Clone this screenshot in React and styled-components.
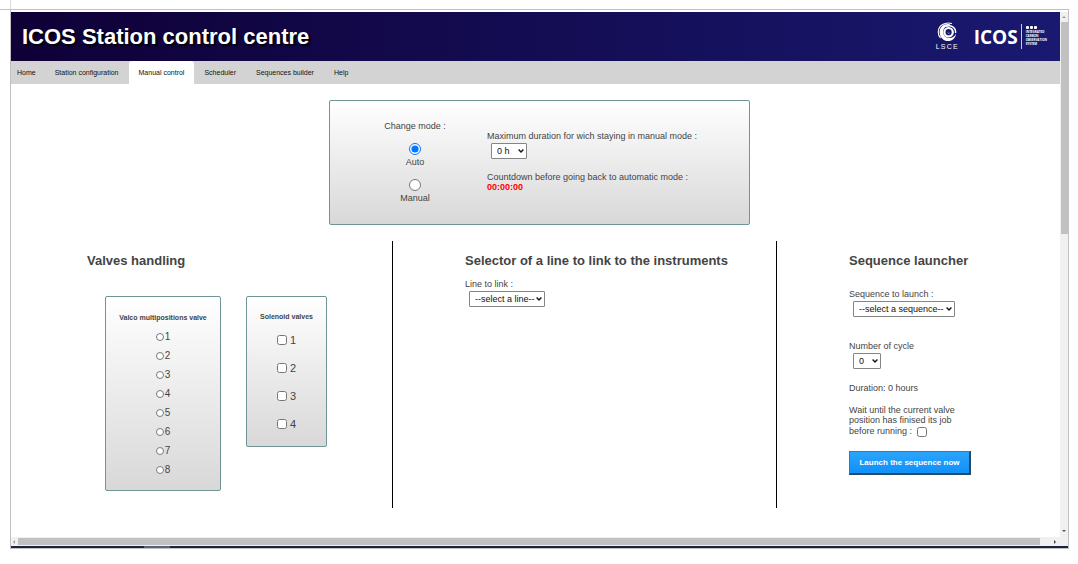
import React from "react";
import styled, { createGlobalStyle } from "styled-components";

const GlobalStyle = createGlobalStyle`
  * { box-sizing: border-box; }
  body {
    margin: 0;
    background: #fff;
    color: #444;
    font: 9px/10px "Liberation Sans", Arial, sans-serif;
  }
  h1, h2, h3, p, ul { margin: 0; padding: 0; }
  input { margin: 0; }
`;

const Page = styled.div`
  display: grid;
  grid-template-columns: 10px minmax(0, 1fr) 9px;
  grid-template-rows: 9px minmax(540px, 1fr) 15px;
  min-height: 100vh;
`;

const Corner = styled.div`
  border-right: 1px solid #dcdcdc;
  margin-right: -1px;
`;

const TopRule = styled.div`
  grid-column: 1;
  grid-row: 2;
  border-top: 1px solid #c4c4c4;
`;

const Frame = styled.div`
  grid-column: 2;
  grid-row: 2;
  display: flex;
  flex-direction: column;
  border: 1px solid #c0c0c4;
  padding-top: 2px;
`;

const Viewport = styled.div`
  flex: 1;
  display: flex;
`;

const Screen = styled.div`
  flex: 1;
  min-width: 0;
`;

const Arrow = styled.span`
  width: 0;
  height: 0;
  border: 2px solid transparent;
  ${(p) => p.$dir === "up" && "border-bottom-color: #999; border-top: 0;"}
  ${(p) => p.$dir === "down" && "border-top-color: #555; border-bottom: 0;"}
  ${(p) => p.$dir === "left" && "border-right-color: #999; border-left: 0;"}
  ${(p) => p.$dir === "right" && "border-left-color: #444; border-right: 0;"}
`;

const ScrollTrack = styled.div`
  display: flex;
  flex-direction: ${(p) => (p.$vertical ? "column" : "row")};
  align-items: center;
  justify-content: space-between;
  flex: none;
  background: #f0f0f0;
  ${(p) => (p.$vertical ? "width: 8px; padding: 4px 0 5px;" : "height: 9px; padding: 0 12px 0 2px;")}
`;

const Thumb = styled.div`
  background: #c1c1c1;
  ${(p) =>
    p.$vertical
      ? "width: 7px; height: 41%; margin: 4px 0 auto;"
      : "height: 7px; flex: 1; margin: 0 14px 0 3px;"}
`;

const BottomBar = styled.div`
  height: 2px;
  flex: none;
  background: linear-gradient(90deg, #1b2340 133px, #5b6078 133px, #5b6078 159px, #1b2340 159px);
`;

const Header = styled.header`
  display: flex;
  align-items: center;
  justify-content: space-between;
  height: 49px;
  padding: 0 13px 0 11px;
  background: linear-gradient(90deg, #0f0036, #191970);
`;

const Title = styled.h1`
  color: #fff;
  font-size: 22px;
  line-height: 26px;
  text-shadow: 2px 2px 2px #000;
`;

const Logos = styled.div`
  display: flex;
  align-items: center;
  gap: 16px;
  color: #fff;
`;

const Lsce = styled.div`
  display: flex;
  flex-direction: column;
  align-items: center;
  width: 22px;
  font-size: 7px;
  line-height: 8px;
  gap: 1px;
`;

const Letters = styled.div`
  align-self: stretch;
  display: flex;
  justify-content: space-between;
`;

const Icos = styled.div`
  display: flex;
  align-items: center;
  font: bold 19px/24px "Open Sans", sans-serif;
`;

const IcosNote = styled.div`
  margin-left: 3px;
  padding: 2px 0 3px 4px;
  border-left: 1px solid #ccd;
  font-size: 3px;
  line-height: 4px;
`;

const Dots = styled.div`
  display: flex;
  gap: 1px;
  height: 4px;
  i { width: 3px; height: 3px; border-radius: 1px; background: #fff; }
`;

const Nav = styled.nav`
  display: flex;
  height: 23px;
  padding-right: 10px;
  background: #d3d3d3;
`;

const Tab = styled.a`
  display: flex;
  align-items: center;
  padding: 0 10px;
  border-radius: 3px 3px 0 0;
  background: ${(p) => (p.$active ? "#fff" : "transparent")};
  color: #111;
  font-size: 7px;
  text-decoration: none;
  &:first-child { padding: 0 9px 0 6px; }
`;

const Panel = styled.section`
  border: 1px solid #6f9599;
  border-radius: 2px;
  background: linear-gradient(#fff, #d8d8d8);
`;

const ModeRow = styled.div`
  display: flex;
  justify-content: center;
  padding: 16px 0 16px 8px;
`;

const ModePanel = styled(Panel)`
  display: flex;
  gap: 41px;
  width: 421px;
  height: 125px;
  padding: 20px 20px 0 54px;
`;

const ModeChoices = styled.div`
  display: flex;
  flex-direction: column;
  align-items: center;
  gap: 12px;
  width: 62px;
`;

const ModeOption = styled.label`
  display: flex;
  flex-direction: column;
  align-items: center;
  gap: 2px;
`;

const Radio = styled.input.attrs({ type: "radio" })`
  width: ${(p) => p.$size}px;
  height: ${(p) => p.$size}px;
`;

const Check = styled.input.attrs({ type: "checkbox" })`
  width: 10px;
  height: 10px;
`;

const ModeDetails = styled.div`
  padding-top: 10px;
`;

const SelectBox = styled.div`
  display: grid;
  align-items: center;
  width: ${(p) => p.$width}px;
  margin: 2px 0 0 4px;
  > * { grid-area: 1 / 1; }
  svg { justify-self: end; margin-right: 3px; pointer-events: none; }
`;

const SelectField = styled.select`
  appearance: none;
  width: 100%;
  height: 16px;
  padding: 0 0 0 5px;
  border: 1px solid #858585;
  border-radius: 1px;
  background: #fff;
  color: #111;
  font: 9px/12px "Liberation Sans", Arial, sans-serif;
`;

const Countdown = styled.p`
  padding-top: 13px;
  strong { display: block; color: #f00; }
`;

const Columns = styled.main`
  display: grid;
  grid-template-columns: 382fr 384fr 283fr;
`;

const Column = styled.section`
  min-height: 267px;
  padding: 12px 0 0 ${(p) => p.$indent}px;
  border-right: 1px solid #000;
  &:last-child { border-right: 0; }
`;

const Heading = styled.h2`
  font-size: 13px;
  line-height: 16px;
  white-space: nowrap;
`;

const Valves = styled.div`
  display: flex;
  align-items: flex-start;
  gap: 25px;
  padding: 27px 0 0 18px;
`;

const ValvePanel = styled(Panel)`
  display: flex;
  flex-direction: column;
  align-items: center;
  width: ${(p) => p.$width}px;
  padding: ${(p) => p.$pad};
`;

const ValveTitle = styled.h3`
  padding-bottom: 4px;
  font-size: 7px;
  line-height: 10px;
  white-space: nowrap;
`;

const ValveRow = styled.label`
  display: flex;
  align-items: center;
  gap: ${(p) => (p.$wide ? 3 : 1)}px;
  height: ${(p) => (p.$wide ? 28 : 19)}px;
  font-size: ${(p) => (p.$wide ? 11 : 10)}px;
`;

const Field = styled.div`
  padding-top: ${(p) => p.$space}px;
  label { display: block; }
`;

const WaitLabel = styled.label`
  display: block;
  width: 122px;
  padding-top: 12px;
  input { margin: 2px 0 2px 2px; vertical-align: middle; }
`;

const LaunchButton = styled.button`
  display: block;
  width: 122px;
  height: 24px;
  margin-top: 12px;
  padding: 0;
  border: 1px solid #3f7899;
  border-right: 2px solid #274a63;
  border-bottom: 2px solid #274a63;
  background: linear-gradient(#2ba4fb, #1090fa);
  color: #fff;
  font: bold 8px/10px "Liberation Sans", Arial, sans-serif;
`;

const tabs = ["Home", "Station configuration", "Manual control", "Scheduler", "Sequences builder", "Help"];

function Select({ id, width, children }) {
  return (
    <SelectBox $width={width}>
      <SelectField id={id}>
        <option>{children}</option>
      </SelectField>
      <svg width="6" height="4" viewBox="0 0 6 4" fill="none" stroke="#111" strokeWidth="1.4" aria-hidden="true">
        <path d="M0.6 0.6L3 3L5.4 0.6" />
      </svg>
    </SelectBox>
  );
}

function LsceMark() {
  return (
    <svg width="20" height="20" viewBox="0 0 20 20" fill="none" stroke="#fff" aria-hidden="true">
      <path d="M15 1.6C8 -0.6 1.4 3.6 1.2 10C1.2 12.6 2.2 14.6 3.6 16" strokeWidth="1.1" />
      <path
        fill="#fff"
        stroke="none"
        d="M13.5 2.4C7.5 1 2.6 4.6 2.6 10.2C2.6 15.6 7 19.4 12 19C16 18.6 18.8 15.6 19 11.6C17.8 14.8 15 16.4 12 16C8.4 15.6 6 12.8 6.2 9.4C6.4 6 9.4 3.2 13.5 2.4Z"
      />
      <path d="M9 4.6C14 2.2 19 5.8 18.6 11" strokeWidth="1.4" />
      <circle cx="11.6" cy="10.2" r="4.2" strokeWidth="2.2" />
      <path d="M10.6 10.6A1.4 1.4 0 0 0 12.6 11" strokeWidth="0.8" opacity="0.7" />
    </svg>
  );
}

export default function App() {
  return (
    <Page>
      <GlobalStyle />
      <Corner />
      <TopRule />
      <Frame>
        <Viewport>
          <Screen>
            <Header>
              <Title>ICOS Station control centre</Title>
              <Logos>
                <Lsce>
                  <LsceMark />
                  <Letters>
                    <span>L</span><span>S</span><span>C</span><span>E</span>
                  </Letters>
                </Lsce>
                <Icos>
                  ICOS
                  <IcosNote>
                    <Dots><i /><i /><i /></Dots>
                    INTEGRATED<br />CARBON<br />OBSERVATION<br />SYSTEM
                  </IcosNote>
                </Icos>
              </Logos>
            </Header>
            <Nav>
              {tabs.map((t) => (
                <Tab key={t} href="#" $active={t === "Manual control"}>{t}</Tab>
              ))}
            </Nav>
            <ModeRow>
              <ModePanel>
                <ModeChoices>
                  <span>Change mode :</span>
                  <ModeOption><Radio $size={12} name="mode" defaultChecked />Auto</ModeOption>
                  <ModeOption><Radio $size={12} name="mode" />Manual</ModeOption>
                </ModeChoices>
                <ModeDetails>
                  <label htmlFor="duration">Maximum duration for wich staying in manual mode :</label>
                  <Select id="duration" width={36}>0 h</Select>
                  <Countdown>
                    Countdown before going back to automatic mode :
                    <strong>00:00:00</strong>
                  </Countdown>
                </ModeDetails>
              </ModePanel>
            </ModeRow>
            <Columns>
              <Column $indent={76}>
                <Heading>Valves handling</Heading>
                <Valves>
                  <ValvePanel $width={116} $pad="16px 0 11px">
                    <ValveTitle>Valco multipositions valve</ValveTitle>
                    {[1, 2, 3, 4, 5, 6, 7, 8].map((n) => (
                      <ValveRow key={n}><Radio $size={8} name="valco" />{n}</ValveRow>
                    ))}
                  </ValvePanel>
                  <ValvePanel $width={81} $pad="15px 0 8px">
                    <ValveTitle>Solenoid valves</ValveTitle>
                    {[1, 2, 3, 4].map((n) => (
                      <ValveRow key={n} $wide><Check />{n}</ValveRow>
                    ))}
                  </ValvePanel>
                </Valves>
              </Column>
              <Column $indent={72}>
                <Heading>Selector of a line to link to the instruments</Heading>
                <Field $space={10}>
                  <label htmlFor="line">Line to link :</label>
                  <Select id="line" width={76}>--select a line--</Select>
                </Field>
              </Column>
              <Column $indent={72}>
                <Heading>Sequence launcher</Heading>
                <Field $space={20}>
                  <label htmlFor="sequence">Sequence to launch :</label>
                  <Select id="sequence" width={102}>--select a sequence--</Select>
                </Field>
                <Field $space={24}>
                  <label htmlFor="cycles">Number of cycle</label>
                  <Select id="cycles" width={28}>0</Select>
                </Field>
                <Field $space={14}>Duration: 0 hours</Field>
                <WaitLabel>
                  Wait until the current valve position has finised its job before running : <Check />
                </WaitLabel>
                <LaunchButton type="button">Launch the sequence now</LaunchButton>
              </Column>
            </Columns>
          </Screen>
          <ScrollTrack $vertical>
            <Arrow $dir="up" />
            <Thumb $vertical />
            <Arrow $dir="down" />
          </ScrollTrack>
        </Viewport>
        <ScrollTrack>
          <Arrow $dir="left" />
          <Thumb />
          <Arrow $dir="right" />
        </ScrollTrack>
        <BottomBar />
      </Frame>
    </Page>
  );
}
